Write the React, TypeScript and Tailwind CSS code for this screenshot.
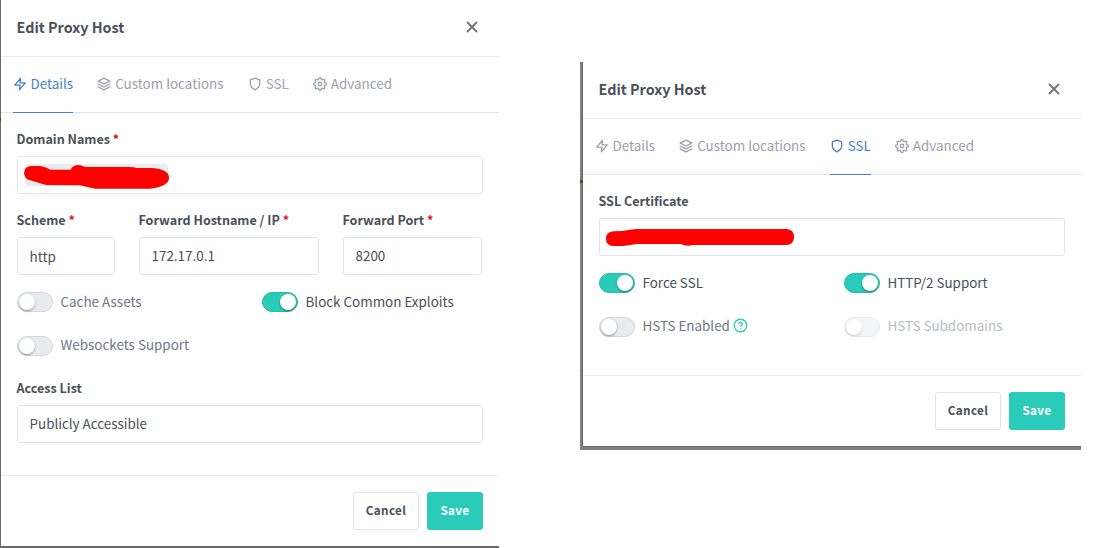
import type { ReactNode } from "react";
import type { IconType } from "react-icons";
import {
  FiHelpCircle,
  FiLayers,
  FiSettings,
  FiShield,
  FiX,
  FiZap,
} from "react-icons/fi";

type TabKey = "details" | "locations" | "ssl" | "advanced";

const tabs: { key: TabKey; label: string; icon: IconType }[] = [
  { key: "details", label: "Details", icon: FiZap },
  { key: "locations", label: "Custom locations", icon: FiLayers },
  { key: "ssl", label: "SSL", icon: FiShield },
  { key: "advanced", label: "Advanced", icon: FiSettings },
];

function Modal({ active, children }: { active: TabKey; children: ReactNode }) {
  return (
    <div className="w-[498px] bg-white">
      <div className="flex h-[57px] items-center justify-between border-b border-[#e9ecef] pr-[18.5px] pb-0.5 pl-[15.5px]">
        <h5 className="text-[14.35px] leading-6 font-bold">Edit Proxy Host</h5>
        <button type="button" aria-label="Close">
          <FiX className="size-[18px] text-[#777777]" strokeWidth={2.5} />
        </button>
      </div>

      <ul className="flex h-14 gap-[24.6px] border-b border-[#dfe4ec] pl-3">
        {tabs.map(({ key, label, icon: Icon }) => (
          <li
            key={key}
            className={`-mb-px flex items-center gap-1 border-b pb-0.5 text-[13.43px] whitespace-nowrap ${
              active === key
                ? "border-[#467fcf] text-[#467fcf]"
                : "border-transparent text-[#9aa0ac]"
            }`}
          >
            <Icon className="-ml-[0.5px] size-3.5" strokeWidth={2.2} />
            {label}
          </li>
        ))}
      </ul>

      {children}

      <div className="flex h-[71px] justify-end gap-2 border-t border-[#e9ecef] px-4 pt-4">
        <button
          type="button"
          className="h-[38px] w-[66px] rounded-[3px] border border-[#dfe2ec] pb-0.5 text-[11.7px] font-bold tracking-[0.03em]"
        >
          Cancel
        </button>
        <button
          type="button"
          className="h-[38px] w-14 rounded-[3px] bg-[#2bcbba] pb-0.5 text-[11.7px] font-bold tracking-[0.03em] text-white"
        >
          Save
        </button>
      </div>
    </div>
  );
}

function Field({
  label,
  required,
  className = "",
  children,
}: {
  label: string;
  required?: boolean;
  className?: string;
  children?: ReactNode;
}) {
  return (
    <div className={className}>
      <label className="mb-1.5 -ml-[0.5px] block h-[21px] text-[12.55px] leading-[19.5px] font-bold whitespace-nowrap">
        {label}
        {required && <span className="text-[#cd201f]"> *</span>}
      </label>
      <div className="flex h-[38px] items-center rounded-[3px] border border-[#dfe4ee] px-[11.5px] text-[13.43px]">
        {children}
      </div>
    </div>
  );
}

function Toggle({
  label,
  on,
  disabled,
  labelClass = "pb-0.5",
  children,
}: {
  label: string;
  on?: boolean;
  disabled?: boolean;
  labelClass?: string;
  children?: ReactNode;
}) {
  return (
    <div
      className={`flex h-5 w-[245px] shrink-0 items-center text-[13.43px] ${
        disabled ? "opacity-50" : ""
      }`}
    >
      <span
        className={`flex h-5 w-9 items-center rounded-full border px-px ${
          on
            ? "justify-end border-[#27b9aa] bg-[#2bcbba]"
            : "border-[#d0d5df] bg-[#e9ecef]"
        }`}
      >
        <span className="size-4 rounded-full bg-white shadow-[0_1px_2px_rgba(0,0,0,0.4)]" />
      </span>
      <span
        className={`ml-[7.5px] ${labelClass} ${
          on ? "text-[#495057]" : "text-[#6e7687]"
        }`}
      >
        {label}
      </span>
      {children}
    </div>
  );
}

export default function App() {
  return (
    <main className="flex h-[548px] w-[1115px] items-start overflow-hidden bg-white font-['Noto_Sans_CJK_SC','Noto_Sans',sans-serif] text-[#495057]">
      <section className="flex h-[548px] w-[499px] border-b-2 border-[#6b6b6b]">
        {/* sliver of the dimmed page behind the dialog */}
        <div className="w-px shrink-0 bg-[#6b6b6b] pt-[118px]">
          <div className="h-[3px] bg-[#2f5500]" />
        </div>
        <Modal active="details">
          <div className="h-[362px] px-4 pt-4">
            <Field label="Domain Names" required className="w-[466px]">
              <div className="relative -ml-[4.5px] h-[22px] w-[143px] rounded-[3px] bg-[#e9ecef]">
                <svg
                  viewBox="72 120 435 72"
                  className="absolute top-[1px] -left-px h-6 w-[145px]"
                  fill="#ff0000"
                >
                  <path d="M72 145Q72 125 92 123L122 123Q142 128 152 134L212 134Q218 120 236 120Q248 121 254 126L388 126Q402 126 410 129L452 129Q507 132 507 158Q507 184 450 191L286 191Q262 187 240 181L138 180Q118 174 98 168Q74 165 72 145Z" />
                </svg>
              </div>
            </Field>

            <div className="mt-4 flex gap-6">
              <Field label="Scheme" required className="w-[98px]">
                http
              </Field>
              <Field
                label="Forward Hostname / IP"
                required
                className="w-[180px]"
              >
                <span className="pb-0.5">172.17.0.1</span>
              </Field>
              <Field label="Forward Port" required className="w-[139px]">
                <span className="pb-0.5">8200</span>
              </Field>
            </div>

            <div className="mt-[17px] flex">
              <Toggle label="Cache Assets" />
              <Toggle label="Block Common Exploits" on />
            </div>
            <div className="mt-6 flex">
              <Toggle label="Websockets Support" labelClass="pb-1" />
            </div>

            <Field label="Access List" className="mt-[22px] w-[466px]">
              <span className="pb-0.5">Publicly Accessible</span>
            </Field>
          </div>
        </Modal>
      </section>

      <section className="mt-[62px] ml-[81px] flex h-[388px] w-[501px] border-b-4 border-[#808080]">
        <div className="w-[3px] shrink-0 border-r border-[#666666] bg-[#808080] pt-[118px]">
          <div className="-mr-px h-[3px] bg-[#2f6000]" />
        </div>
        <div className="h-[385px] border-b border-[#666666]">
          <Modal active="ssl">
            <div className="h-[200px] px-4 pt-4">
              <Field label="SSL Certificate" className="w-[466px]">
                <svg
                  viewBox="108 117 564 51"
                  className="-ml-[5.5px] h-[17px] w-[188px]"
                  fill="#ff0000"
                >
                  <path d="M108 146Q108 126 130 124L158 123Q180 119 200 117L650 117Q672 119 672 141Q672 163 650 165L368 165Q350 171 332 162L200 162Q175 167 158 168L130 168Q108 166 108 146Z" />
                </svg>
              </Field>

              <div className="mt-[17px] flex">
                <Toggle label="Force SSL" on />
                <Toggle label="HTTP/2 Support" on />
              </div>
              <div className="mt-6 flex">
                <Toggle label="HSTS Enabled" labelClass="pb-1">
                  <FiHelpCircle
                    className="mb-1 ml-[3px] size-[15px] text-[#2bcbba]"
                    strokeWidth={2.2}
                  />
                </Toggle>
                <Toggle label="HSTS Subdomains" labelClass="pb-1" disabled />
              </div>
            </div>
          </Modal>
        </div>
      </section>
    </main>
  );
}
